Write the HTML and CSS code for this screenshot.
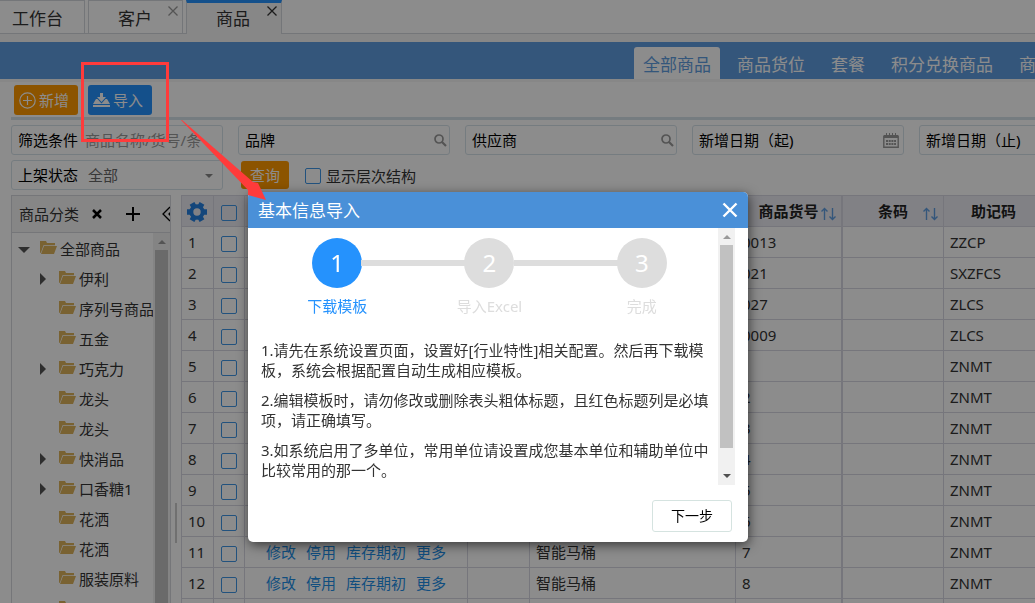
FILE: index.html
```html
<!DOCTYPE html>
<html lang="zh-CN">
<head>
<meta charset="utf-8">
<title>商品</title>
<link rel="stylesheet" href="styles.css">
</head>
<body>
<svg class="sprite" aria-hidden="true">
  <symbol id="folder" viewBox="0 0 17 14"><path d="M0 0h6l1 2h8v2.300H3.500L1 11.500 0 12z"/><path d="M4 5h13l-3 8H1z"/></symbol>
  <symbol id="search" viewBox="0 0 13 13"><circle cx="5" cy="5" r="4" fill="none" stroke="currentColor" stroke-width="1.7"/><path d="M8 8l4 4" stroke="currentColor" stroke-width="2.2"/></symbol>
  <symbol id="calendar" viewBox="0 0 16 15"><path d="M1 2h14v3H1z" fill="currentColor"/><path d="M.8 2.5v11.7h14.4V2.5" fill="none" stroke="currentColor" stroke-width="1.4"/><path d="M3.500 0v3M6.500 0v3M9.500 0v3M12.500 0v3" stroke="currentColor"/><path d="M3 8h10M3 11h10" stroke="currentColor" stroke-width="2" stroke-dasharray="2 .7"/></symbol>
  <symbol id="sort" viewBox="0 0 15 14"><path d="M3.500 13V1.500M.5 4.500l3-3 3 3M11.500 1v11.500M8.500 9.500l3 3 3-3" fill="none" stroke="currentColor" stroke-width="1.400"/></symbol>
  <symbol id="cross" viewBox="0 0 10 10"><path d="M.5.5l9 9M9.500.5l-9 9" fill="none" stroke="currentColor" stroke-width="1.300"/></symbol>
</svg>

<div class="app">
  <nav class="tabs">
    <a class="tab tab-home" href="#">工作台</a>
    <a class="tab" href="#">客户<svg class="tab-close"><use href="#cross"/></svg></a>
    <a class="tab tab-active" href="#">商品<svg class="tab-close"><use href="#cross"/></svg></a>
  </nav>
  <nav class="subnav">
    <a class="sub sub-active" href="#">全部商品</a>
    <a class="sub" href="#">商品货位</a>
    <a class="sub" href="#">套餐</a>
    <a class="sub" href="#">积分兑换商品</a>
    <a class="sub" href="#">商品标签</a>
  </nav>
  <main class="page">
    <div class="toolbar">
      <button class="btn btn-orange" type="button"><svg class="ico-plus" viewBox="0 0 17 17"><circle cx="8.500" cy="8.500" r="7.700"/><path d="M8.500 4v9M4 8.500h9"/></svg>新增</button>
      <button class="btn btn-blue" type="button"><svg class="ico-import" viewBox="0 0 17 15"><path d="M7 0h3v4h3L8.500 9 4 4h3z"/><path d="M3 6L0 11h17l-3-5h-1.500L8.500 10.500 4.500 6z"/><path d="M0 12h17v2H0z"/></svg>导入</button>
    </div>
    <form class="filters">
      <div class="filter-row">
        <label class="field"><span>筛选条件</span><input type="text" placeholder="商品名称/货号/条"></label>
        <label class="field"><span>品牌</span><input type="text"><svg class="ico-search"><use href="#search"/></svg></label>
        <label class="field"><span>供应商</span><input type="text"><svg class="ico-search"><use href="#search"/></svg></label>
        <label class="field"><span>新增日期（起)</span><input type="text"><svg class="ico-cal"><use href="#calendar"/></svg></label>
        <label class="field"><span>新增日期（止)</span><input type="text"><svg class="ico-cal"><use href="#calendar"/></svg></label>
      </div>
      <div class="filter-row">
        <label class="field field-select"><span>上架状态</span><select><option>全部</option></select></label>
        <button class="btn btn-orange btn-query" type="button">查询</button>
        <label class="check"><input type="checkbox">显示层次结构</label>
      </div>
    </form>
    <div class="content">
      <aside class="side">
        <div class="side-head">
          <span>商品分类</span>
          <svg class="side-x" viewBox="0 0 10 10"><path d="M1 1l8 8M9 1l-8 8"/></svg>
          <svg class="side-plus" viewBox="0 0 14 14"><path d="M7 0v14M0 7h14"/></svg>
          <svg class="side-fold" viewBox="0 0 9 16"><path d="M8 1L1 8l7 7M12 3L7 8l5 5"/></svg>
        </div>
        <div class="side-body">
          <ul class="tree">
            <li class="root open"><svg class="folder"><use href="#folder"/></svg>全部商品</li>
            <li class="shut"><svg class="folder"><use href="#folder"/></svg>伊利</li>
            <li><svg class="folder"><use href="#folder"/></svg>序列号商品</li>
            <li><svg class="folder"><use href="#folder"/></svg>五金</li>
            <li class="shut"><svg class="folder"><use href="#folder"/></svg>巧克力</li>
            <li><svg class="folder"><use href="#folder"/></svg>龙头</li>
            <li><svg class="folder"><use href="#folder"/></svg>龙头</li>
            <li class="shut"><svg class="folder"><use href="#folder"/></svg>快消品</li>
            <li class="shut"><svg class="folder"><use href="#folder"/></svg>口香糖1</li>
            <li><svg class="folder"><use href="#folder"/></svg>花洒</li>
            <li><svg class="folder"><use href="#folder"/></svg>花洒</li>
            <li><svg class="folder"><use href="#folder"/></svg>服装原料</li>
            <li><svg class="folder"><use href="#folder"/></svg></li>
          </ul>
          <div class="scroll scroll-side"><i class="up"></i><i class="thumb"></i></div>
        </div>
      </aside>
      <div class="splitter"><i></i></div>
      <div class="grid">
        <table>
          <colgroup><col class="c-no"><col class="c-check"><col class="c-ops"><col class="c-img"><col class="c-name"><col class="c-code"><col class="c-bar"><col class="c-memo"></colgroup>
          <thead>
            <tr>
              <th class="gear-cell"><svg class="gear" viewBox="0 0 20 20"><circle cx="10" cy="10" r="5.700" fill="none" stroke="currentColor" stroke-width="4"/><path d="M0 10h3.500M16.500 10H20M5 1.340l1.750 3.030M13.250 15.630L15 18.660M15 1.340l-1.750 3.030M6.750 15.630L5 18.660" stroke="currentColor" stroke-width="5.500"/></svg></th>
              <th class="tick"><input type="checkbox" aria-label="全选"></th>
              <th></th><th></th><th></th>
              <th>商品货号<svg class="sort"><use href="#sort"/></svg></th>
              <th>条码<svg class="sort"><use href="#sort"/></svg></th>
              <th>助记码</th>
            </tr>
          </thead>
          <tbody>
            <tr><td>1</td><td class="tick"><input type="checkbox" aria-label="1"></td><td></td><td></td><td></td><td>0013</td><td></td><td>ZZCP</td></tr>
            <tr><td>2</td><td class="tick"><input type="checkbox" aria-label="2"></td><td></td><td></td><td></td><td>021</td><td></td><td>SXZFCS</td></tr>
            <tr><td>3</td><td class="tick"><input type="checkbox" aria-label="3"></td><td></td><td></td><td></td><td>027</td><td></td><td>ZLCS</td></tr>
            <tr><td>4</td><td class="tick"><input type="checkbox" aria-label="4"></td><td></td><td></td><td></td><td>0009</td><td></td><td>ZLCS</td></tr>
            <tr><td>5</td><td class="tick"><input type="checkbox" aria-label="5"></td><td></td><td></td><td></td><td></td><td></td><td>ZNMT</td></tr>
            <tr><td>6</td><td class="tick"><input type="checkbox" aria-label="6"></td><td></td><td></td><td></td><td>2</td><td></td><td>ZNMT</td></tr>
            <tr><td>7</td><td class="tick"><input type="checkbox" aria-label="7"></td><td></td><td></td><td></td><td>3</td><td></td><td>ZNMT</td></tr>
            <tr><td>8</td><td class="tick"><input type="checkbox" aria-label="8"></td><td></td><td></td><td></td><td>4</td><td></td><td>ZNMT</td></tr>
            <tr><td>9</td><td class="tick"><input type="checkbox" aria-label="9"></td><td></td><td></td><td></td><td>5</td><td></td><td>ZNMT</td></tr>
            <tr><td>10</td><td class="tick"><input type="checkbox" aria-label="10"></td><td></td><td></td><td></td><td>6</td><td></td><td>ZNMT</td></tr>
            <tr><td>11</td><td class="tick"><input type="checkbox" aria-label="11"></td><td class="ops"><a href="#">修改</a><a href="#">停用</a><a href="#">库存期初</a><a href="#">更多</a></td><td></td><td>智能马桶</td><td>7</td><td></td><td>ZNMT</td></tr>
            <tr><td>12</td><td class="tick"><input type="checkbox" aria-label="12"></td><td class="ops"><a href="#">修改</a><a href="#">停用</a><a href="#">库存期初</a><a href="#">更多</a></td><td></td><td>智能马桶</td><td>8</td><td></td><td>ZNMT</td></tr>
            <tr><td></td><td></td><td></td><td></td><td></td><td></td><td></td><td></td></tr>
          </tbody>
        </table>
      </div>
    </div>
  </main>
</div>

<div class="overlay"></div>

<section class="modal" role="dialog" aria-labelledby="modal-title">
  <header class="modal-head">
    <h1 id="modal-title">基本信息导入</h1>
    <button class="modal-close" type="button" aria-label="关闭"><svg viewBox="0 0 16 16"><path d="M1.500 1.500l13 13M14.500 1.500l-13 13"/></svg></button>
  </header>
  <div class="modal-body">
    <div class="modal-content">
      <ol class="steps">
        <li class="step step-on"><b>1</b><span>下载模板</span></li>
        <li class="step"><b>2</b><span>导入Excel</span></li>
        <li class="step"><b>3</b><span>完成</span></li>
      </ol>
      <div class="tips">
        <p>1.请先在系统设置页面，设置好[行业特性]相关配置。然后再下载模板，系统会根据配置自动生成相应模板。</p>
        <p>2.编辑模板时，请勿修改或删除表头粗体标题，且红色标题列是必填项，请正确填写。</p>
        <p>3.如系统启用了多单位，常用单位请设置成您基本单位和辅助单位中比较常用的那一个。</p>
      </div>
    </div>
    <div class="scroll"><i class="up"></i><i class="thumb"></i><i class="down"></i></div>
  </div>
  <footer class="modal-foot"><button class="btn-next" type="button">下一步</button></footer>
</section>

<div class="mark-box"></div>
<svg class="mark-arrow" viewBox="0 0 86 82"><path d="M0 0L1 0 72 62l5 1 8 17-18-5 0-5z"/></svg>
</body>
</html>
```

FILE: styles.css
```css
* { box-sizing: border-box; }
body {
  margin: 0;
  height: 100vh;
  overflow: hidden;
  position: relative;
  background: #fff;
  color: #333;
  font: 15px/20px "Noto Sans", "Noto Sans CJK SC", sans-serif;
}
a { color: inherit; text-decoration: none; }
ul, ol { list-style: none; margin: 0; padding: 0; }
button, input, select { font: inherit; color: inherit; }
.sprite { position: absolute; width: 0; height: 0; }

.app { display: flex; flex-direction: column; height: 100vh; overflow: hidden; }

/* top tabs */
.tabs { display: flex; height: 34px; border-bottom: 1px solid #d4d7dc; gap: 3px; }
.tab {
  position: relative;
  width: 95px;
  padding: 6px 0 0 29px;
  border: 1px solid #d4d7dc;
  border-bottom: 0;
  font-size: 17px;
  line-height: 24px;
}
.tab-home { width: 85px; padding-left: 12px; border-left: 0; }
.tab-active {
  height: 34px;
  width: 96px;
  background: #f6f6f6;
  border-top: 3px solid #2592fd;
  padding-top: 4px;
}
.tab-close { position: absolute; right: 4px; top: 5px; width: 10px; height: 10px; color: #999; }
.tab-active .tab-close { top: 3px; color: #333; }

/* blue navigation */
.subnav {
  display: flex;
  gap: 8px;
  height: 37px;
  margin-top: 8px;
  padding: 5px 0 0 634px;
  background: #609de0;
  color: #fff;
  box-shadow: 0 -8px 0 #f6f6f6, 0 3px 0 #f6f6f6;
  flex: none;
}
.sub { flex: none; padding: 6px 9px 0; font-size: 17px; line-height: 24px; border-radius: 3px 3px 0 0; }
.sub-active { background: #fff; color: #609de0; }

.page { flex: 1; min-height: 0; display: flex; flex-direction: column; padding-left: 11px; }
.toolbar { display: flex; gap: 10px; padding: 6px 0 2px 3px; border-bottom: 3px solid #d6e2ea; }
.btn {
  display: flex;
  align-items: center;
  gap: 3px;
  height: 30px;
  padding: 0 9px 0 5px;
  border: 0;
  border-radius: 3px;
  color: #fff;
  white-space: nowrap;
}
.btn-orange { background: #ff9900; }
.btn-blue { background: #2592fd; }
.ico-plus { width: 17px; height: 17px; fill: none; stroke: #fff; stroke-width: 1.200; }
.ico-import { width: 17px; height: 15px; fill: #fff; }

/* filters */
.filters { display: flex; flex-direction: column; gap: 5px; padding-top: 5px; }
.filter-row { display: flex; align-items: center; height: 30px; gap: 15px; }
.field {
  flex: none;
  display: flex;
  align-items: center;
  gap: 7px;
  width: 212px;
  height: 30px;
  padding: 0 2px 0 6px;
  border: 1px solid #d6e2ea;
  border-radius: 3px;
  color: #000;
}
.field span { flex: none; }
.field input { flex: 1; min-width: 0; width: 0; padding: 0; border: 0; background: none; outline: 0; }
.field input::placeholder { color: #999; opacity: 1; }
.ico-search { width: 13px; height: 13px; color: #999; }
.ico-cal { width: 16px; height: 15px; color: #999; margin-right: 2px; }
.field-select { position: relative; }
.field-select::after {
  content: "";
  position: absolute;
  right: 9px;
  top: 13px;
  border: 4px solid transparent;
  border-top-color: #888;
  border-bottom: 0;
}
.field-select select { flex: 1; appearance: none; padding: 0 0 0 3px; border: 0; background: none; color: #666; }
.btn-query { height: 28px; padding: 0 9px; margin-left: 3px; }
.check { display: flex; align-items: center; gap: 5px; padding: 2px 0 0 1px; }
input[type="checkbox"] {
  appearance: none;
  display: block;
  width: 16px;
  height: 16px;
  margin: 0;
  border: 1px solid #3f95e5;
  border-radius: 2px;
}

/* category tree */
.content { flex: 1; min-height: 0; display: flex; padding-top: 5px; }
.side { flex: none; display: flex; flex-direction: column; width: 160px; border: 1px solid #d6d8dc; border-bottom: 0; }
.side-head {
  display: flex;
  align-items: center;
  height: 37px;
  padding-left: 7px;
  background: #f5f5f5;
  border-bottom: 1px solid #d6d8dc;
  white-space: nowrap;
  overflow: hidden;
}
.side-head span { flex: none; }
.side-head svg { flex: none; fill: none; stroke: #000; }
.side-x { width: 10px; height: 10px; margin-left: 13px; stroke-width: 2.500; }
.side-plus { width: 14px; height: 14px; margin-left: 24px; stroke-width: 2; }
.side-fold { width: 9px; height: 16px; margin-left: 22px; stroke-width: 1.300; }
.side-body { flex: 1; min-height: 0; display: flex; overflow: hidden; }
.tree { flex: 1; min-width: 0; padding-top: 1px; }
.tree li {
  display: flex;
  align-items: center;
  gap: 3px;
  position: relative;
  height: 30px;
  padding-left: 47px;
  white-space: nowrap;
  overflow: hidden;
}
.tree .root { padding-left: 28px; }
.folder { flex: none; width: 17px; height: 14px; fill: #dcb35c; margin-bottom: 3px; }
.open::before, .shut::before { content: ""; position: absolute; border: 6px solid transparent; }
.open::before { left: 6px; top: 13px; border-top-color: #555; border-bottom: 0; }
.shut::before { left: 28px; top: 9px; border-left-color: #555; border-right: 0; }

/* scrollbars */
.scroll { flex: none; display: flex; flex-direction: column; align-items: center; width: 17px; background: #f1f1f1; }
.scroll .up { margin: 7px 0 6px; border: 4px solid transparent; border-bottom-color: #999; border-top: 0; }
.scroll .thumb { width: 13px; height: 203px; background: #c1c1c1; }
.scroll .down { margin: auto 0 7px; border: 4px solid transparent; border-top-color: #505050; border-bottom: 0; }
.scroll-side .thumb { flex: 1; height: auto; }

.splitter { flex: none; width: 10px; padding: 308px 0 0 4px; }
.splitter i { display: block; width: 2px; height: 40px; background: #ccc; }

/* product table */
.grid { flex: 1; min-width: 0; overflow: hidden; border-left: 1px solid #d8d8e2; }
table { width: 862px; table-layout: fixed; border-collapse: separate; border-spacing: 0; border-top: 1px solid #d8d8e2; }
.c-no { width: 32px; }
.c-check { width: 31px; }
.c-ops { width: 223px; }
.c-img { width: 62px; }
.c-name { width: 206px; }
.c-code { width: 107px; }
.c-bar { width: 101px; }
.c-memo { width: 100px; }
th, td {
  height: 31px;
  padding: 0 6px;
  border: solid #d8d8e2;
  border-width: 0 1px 1px 0;
  text-align: left;
  white-space: nowrap;
}
th { position: relative; text-align: center; background: #ececf2; color: #222; font-weight: 700; }
th:nth-child(6), td:nth-child(6) { border-right-width: 2px; }
.gear-cell { padding: 2px 5px 0; }
.gear { display: block; width: 20px; height: 20px; color: #2580e0; }
.tick { padding: 3px 0 0 7px; }
.sort { position: absolute; right: 5px; top: 11px; width: 15px; height: 14px; color: #609de0; }
.ops { padding-left: 21px; color: #1e8fe8; }
.ops a { margin-right: 10px; }

/* dialog */
.overlay { position: fixed; inset: 0; background: rgba(0, 0, 0, .45); }
.modal {
  position: absolute;
  left: 248px;
  top: 192px;
  width: 500px;
  background: #fff;
  border-radius: 5px;
  box-shadow: 1px 3px 12px rgba(0, 0, 0, .6);
}
.modal-head {
  display: flex;
  align-items: center;
  justify-content: space-between;
  height: 36px;
  padding: 0 10px;
  border-radius: 5px 5px 0 0;
  background: #4a90d8;
  color: #fff;
}
.modal-head h1 { margin: 0; padding-top: 2px; font-size: 17px; font-weight: 400; line-height: 24px; }
.modal-close { display: flex; padding: 0; border: 0; background: none; }
.modal-close svg { width: 16px; height: 16px; fill: none; stroke: #fff; stroke-width: 2.400; }
.modal-body { display: flex; height: 257px; padding-right: 13px; }
.modal-content { flex: 1; min-width: 0; padding: 10px 0 0 13px; }
.steps { display: flex; }
.step { position: relative; flex: 1; display: flex; flex-direction: column; align-items: center; gap: 8px; color: #ddd; }
.step b {
  position: relative;
  width: 50px;
  height: 50px;
  border-radius: 50%;
  background: #ddd;
  color: #fff;
  font-size: 24px;
  font-weight: 400;
  line-height: 50px;
  text-align: center;
}
.step + .step::before {
  content: "";
  position: absolute;
  top: 22px;
  right: calc(50% + 24px);
  width: calc(100% - 48px);
  height: 6px;
  background: #ddd;
}
.step-on { color: #2592fd; }
.step-on b { background: #2592fd; }
.tips { padding: 24px 8px 0 0; }
.tips p { margin: 0 0 10px; }
.modal-foot { display: flex; justify-content: flex-end; padding: 15px 16px 10px; }
.btn-next {
  width: 80px;
  height: 32px;
  border: 1px solid #d5e3e0;
  border-radius: 3px;
  background: #fff;
  color: #000;
  font-size: 14px;
}

/* annotations */
.mark-box { position: absolute; left: 81px; top: 62px; width: 88px; height: 80px; border: 3px solid #ff3b3b; }
.mark-arrow { position: absolute; left: 181px; top: 120px; width: 86px; height: 82px; fill: #ff3b3b; }
```
